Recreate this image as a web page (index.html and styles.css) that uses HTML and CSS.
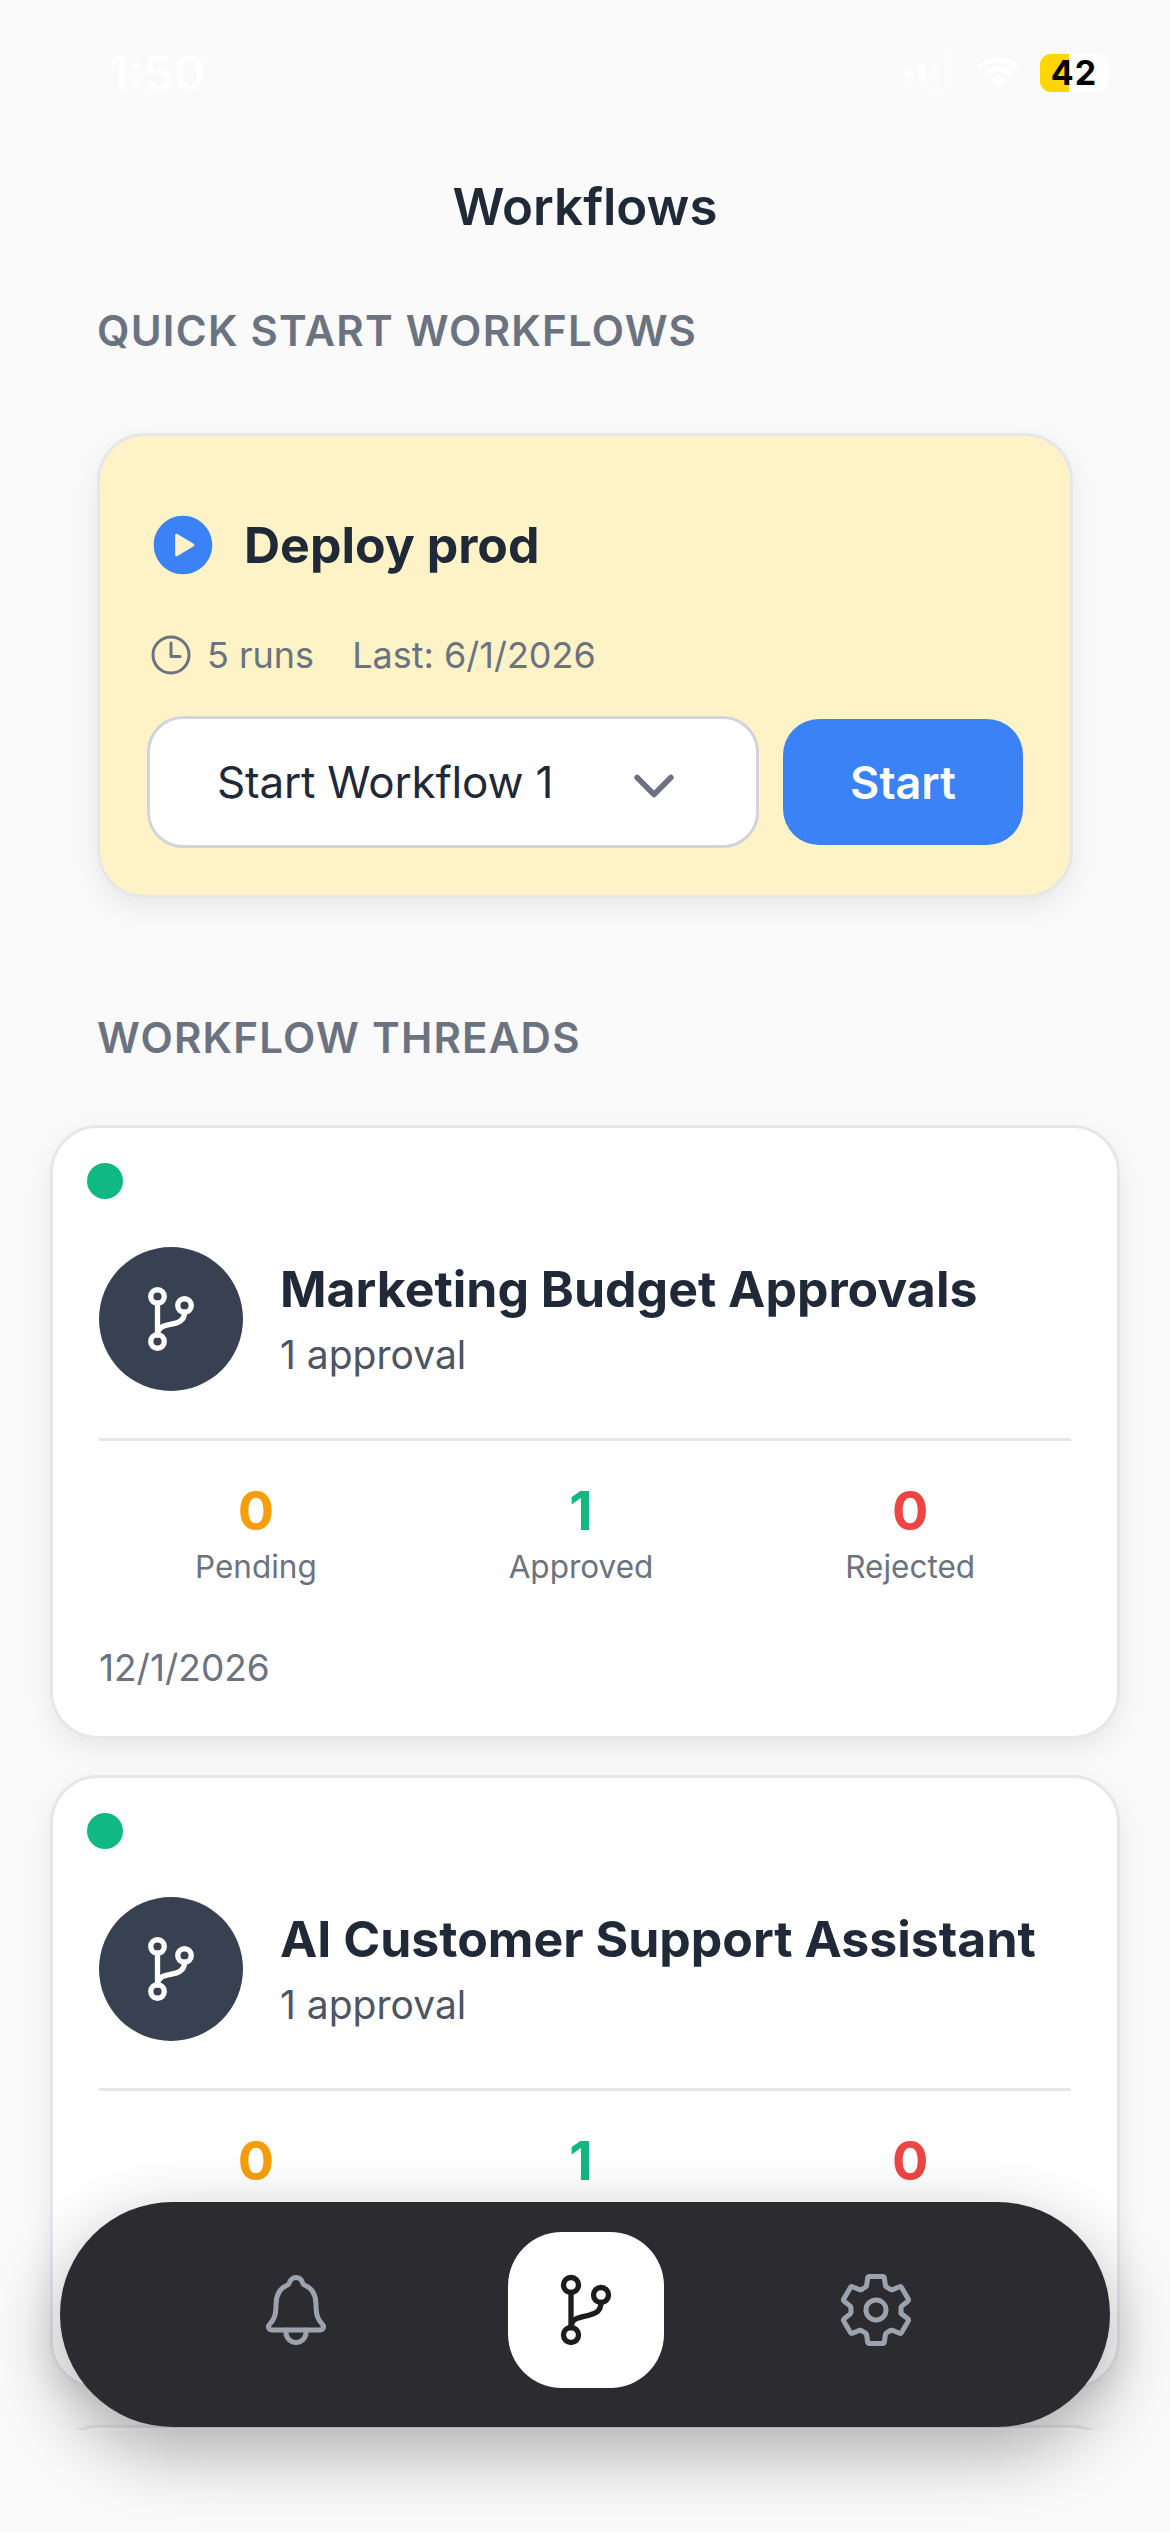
FILE: index.html
```html
<!DOCTYPE html>
<html lang="en">
<head>
    <meta charset="UTF-8">
    <meta name="viewport" content="width=device-width, initial-scale=1.0">
    <title>Workflows</title>
    <link rel="stylesheet" href="styles.css">
</head>
<body>
    <svg class="sprites" aria-hidden="true">
        <symbol id="i-branch" viewBox="0 0 512 512">
            <circle cx="160" cy="96" r="48"/>
            <circle cx="160" cy="416" r="48"/>
            <path d="M160 368V144"/>
            <circle cx="352" cy="160" r="48"/>
            <path d="M352 208c0 128-192 48-192 160"/>
        </symbol>
    </svg>

    <div class="status-bar">
        <span class="time">1:50</span>
        <div class="status-icons">
            <svg class="signal" viewBox="0 0 52 36">
                <rect x="1" y="13" width="8" height="11" rx="3"/>
                <rect x="14" y="8" width="8" height="16" rx="3"/>
                <rect class="signal-off" x="27" y="4" width="8" height="20" rx="3"/>
                <rect class="signal-off" x="40" y="0" width="8" height="24" rx="3"/>
                <circle class="signal-off" cx="5" cy="31" r="4"/>
                <circle class="signal-off" cx="18" cy="31" r="4"/>
                <circle class="signal-off" cx="31" cy="31" r="4"/>
                <circle class="signal-off" cx="44" cy="31" r="4"/>
            </svg>
            <svg class="wifi" viewBox="0 0 48 36">
                <path d="M24 8c7 0 13 2.600 18 7l3.500-4C39.800 5.500 32.300 2 24 2S8.200 5.500 2.500 11L6 15c5-4.400 11-7 18-7z"/>
                <path d="M24 17c4.500 0 8.300 1.500 11.500 4.300l3.500-4C34.900 13.500 29.800 11 24 11s-10.900 2.500-15 6.300l3.500 4C15.700 18.500 19.500 17 24 17z"/>
                <path d="M24 21c-3 0-5.500 1-7.700 3L24 34l7.700-10c-2.200-2-4.700-3-7.700-3z"/>
            </svg>
            <div class="battery">
                <div class="battery-fill"></div>
                <span class="battery-level">42</span>
            </div>
        </div>
    </div>

    <h1 class="page-title">Workflows</h1>

    <div class="content">
        <h2 class="section-label">Quick Start Workflows</h2>

        <div class="quick-card">
            <div class="quick-head">
                <svg class="play-icon" viewBox="0 0 512 512">
                    <path d="M256 48C141.310 48 48 141.310 48 256s93.310 208 208 208 208-93.310 208-208S370.690 48 256 48zm74.770 217.300l-114.450 69.140a10.780 10.780 0 01-16.320-9.310V186.870a10.780 10.780 0 0116.320-9.310l114.450 69.140a10.890 10.890 0 010 18.600z"/>
                </svg>
                <span class="quick-title">Deploy prod</span>
            </div>
            <div class="quick-meta">
                <svg class="clock-icon" viewBox="0 0 512 512">
                    <path d="M256 64C150 64 64 150 64 256s86 192 192 192 192-86 192-192S362 64 256 64z"/>
                    <path d="M256 128v144h96"/>
                </svg>
                <span class="runs">5 runs</span>
                <span>Last: 6/1/2026</span>
            </div>
            <div class="quick-actions">
                <div class="select-box">
                    <span>Start Workflow 1</span>
                    <svg class="chevron" viewBox="0 0 512 512"><path d="M112 184l144 144 144-144"/></svg>
                </div>
                <button class="start-btn" type="button">Start</button>
            </div>
        </div>

        <h2 class="section-label threads-label">Workflow Threads</h2>

        <div class="thread-card">
            <span class="live-dot"></span>
            <div class="thread-head">
                <div class="avatar"><svg class="branch"><use href="#i-branch"/></svg></div>
                <div>
                    <div class="thread-title">Marketing Budget Approvals</div>
                    <div class="thread-sub">1 approval</div>
                </div>
            </div>
            <div class="stats">
                <div class="stat"><div class="stat-num pending">0</div><div class="stat-label">Pending</div></div>
                <div class="stat"><div class="stat-num approved">1</div><div class="stat-label">Approved</div></div>
                <div class="stat"><div class="stat-num rejected">0</div><div class="stat-label">Rejected</div></div>
            </div>
            <div class="thread-date">12/1/2026</div>
        </div>

        <div class="thread-card">
            <span class="live-dot"></span>
            <div class="thread-head">
                <div class="avatar"><svg class="branch"><use href="#i-branch"/></svg></div>
                <div>
                    <div class="thread-title">AI Customer Support Assistant</div>
                    <div class="thread-sub">1 approval</div>
                </div>
            </div>
            <div class="stats">
                <div class="stat"><div class="stat-num pending">0</div><div class="stat-label">Pending</div></div>
                <div class="stat"><div class="stat-num approved">1</div><div class="stat-label">Approved</div></div>
                <div class="stat"><div class="stat-num rejected">0</div><div class="stat-label">Rejected</div></div>
            </div>
            <div class="thread-date">12/1/2026</div>
        </div>

        <div class="thread-card thread-next"></div>
    </div>

    <nav class="tab-bar">
        <svg class="tab-icon" viewBox="0 0 512 512">
            <path d="M427.680 351.430C402 320 383.870 304 383.870 217.350 383.870 138 343.350 109.730 310 96c-4.430-1.820-8.600-6-9.950-10.550C294.200 65.540 277.800 48 256 48s-38.210 17.550-44 37.470c-1.350 4.600-5.520 8.710-9.950 10.530-33.390 13.750-73.870 41.920-73.870 121.350C128.130 304 110 320 84.320 351.430 73.680 364.450 83 384 101.610 384h308.880c18.510 0 27.770-19.610 17.190-32.570z"/>
            <path d="M320 384v16a64 64 0 01-128 0v-16"/>
        </svg>
        <div class="tab-active"><svg class="branch"><use href="#i-branch"/></svg></div>
        <svg class="tab-icon" viewBox="0 0 512 512">
            <path d="M262.290 192.310a64 64 0 1057.400 57.400 64.130 64.130 0 00-57.400-57.400zM416.390 256a154.340 154.340 0 01-1.530 20.790l45.210 35.460a10.810 10.810 0 012.450 13.750l-42.770 74a10.810 10.810 0 01-13.140 4.590l-44.900-18.080a16.110 16.110 0 00-15.170 1.750A164.480 164.480 0 01325 400.800a15.940 15.940 0 00-8.820 12.140l-6.730 47.890a11.080 11.080 0 01-10.680 9.170h-85.540a11.110 11.110 0 01-10.690-8.870l-6.720-47.820a16.070 16.070 0 00-9-12.220 155.300 155.300 0 01-21.460-12.570 16 16 0 00-15.110-1.710l-44.890 18.070a10.810 10.810 0 01-13.140-4.580l-42.770-74a10.800 10.800 0 012.450-13.750l38.210-30a16.050 16.050 0 006-14.080c-.36-4.170-.58-8.330-.58-12.500s.21-8.270.58-12.350a16 16 0 00-6.070-13.940l-38.190-30A10.810 10.810 0 0149.480 186l42.770-74a10.810 10.810 0 0113.140-4.590l44.900 18.080a16.110 16.110 0 0015.170-1.750A164.480 164.480 0 01187 111.200a15.940 15.940 0 008.820-12.140l6.730-47.890A11.080 11.080 0 01213.230 42h85.540a11.110 11.110 0 0110.690 8.870l6.720 47.820a16.070 16.070 0 009 12.220 155.300 155.300 0 0121.460 12.570 16 16 0 0015.110 1.710l44.890-18.070a10.810 10.810 0 0113.140 4.580l42.770 74a10.800 10.800 0 01-2.450 13.750l-38.210 30a16.050 16.050 0 00-6.050 14.080c.33 4.140.55 8.300.55 12.470z"/>
        </svg>
    </nav>
</body>
</html>
```

FILE: styles.css
```css
:root {
    --background-color: #fafafa;
    --text-color: #1f2937;
    --muted-color: #6b7280;
    --border-color: #e5e7eb;
    --blue: #3b82f6;
    --green: #10b981;
    --nav-color: #2c2c30;
}
* {
    box-sizing: border-box;
}
html, body {
    margin: 0;
    padding: 0;
}
body {
    position: relative;
    width: 1170px;
    height: 2532px;
    overflow: hidden;
    font-family: 'Inter', 'Liberation Sans', sans-serif;
    color: var(--text-color);
    background-color: var(--background-color);
}
.sprites {
    display: none;
}
.status-bar {
    display: flex;
    justify-content: space-between;
    align-items: center;
    height: 174px;
    padding: 0 62px 28px 108px;
    color: #fff;
}
.time {
    font-size: 48px;
    font-weight: 600;
}
.status-icons {
    display: flex;
    align-items: center;
}
.signal {
    width: 52px;
    height: 36px;
    fill: #fff;
}
.signal-off {
    opacity: 0.4;
}
.wifi {
    width: 48px;
    height: 36px;
    margin-left: 18px;
    fill: #fff;
}
.battery {
    position: relative;
    width: 68px;
    height: 38px;
    margin-left: 18px;
    border-radius: 11px;
    background-color: #fff;
}
.battery-fill {
    width: 42%;
    height: 100%;
    border-radius: 11px 0 0 11px;
    background-color: #ffd600;
}
.battery-level {
    position: absolute;
    top: 0;
    left: 0;
    width: 100%;
    font-size: 34px;
    font-weight: 700;
    line-height: 38px;
    letter-spacing: 1px;
    text-align: center;
    color: #000;
}
.page-title {
    margin: 0;
    font-size: 51px;
    font-weight: 600;
    line-height: 66px;
    text-align: center;
}
.content {
    height: 2190px;
    padding: 65px 50px 0;
    overflow: hidden;
}
.section-label {
    margin: 0 0 77px 47px;
    font-size: 42px;
    font-weight: 600;
    line-height: 51px;
    letter-spacing: 1.25px;
    text-transform: uppercase;
    color: var(--muted-color);
}
.threads-label {
    margin-top: 114px;
    margin-bottom: 62px;
}
.quick-card {
    width: 976px;
    margin-left: 47px;
    padding: 73px 47px 47px;
    background-color: #fef3c7;
    border: 3px solid var(--border-color);
    border-radius: 48px;
    box-shadow: 0 10px 30px rgba(0, 0, 0, 0.08);
}
.quick-head {
    display: flex;
    align-items: center;
    gap: 25px;
}
.play-icon {
    width: 72px;
    height: 72px;
    fill: var(--blue);
}
.quick-title {
    font-size: 50px;
    font-weight: 700;
}
.quick-meta {
    display: flex;
    align-items: center;
    margin-top: 50px;
    font-size: 36px;
    color: var(--muted-color);
}
.clock-icon {
    width: 48px;
    height: 48px;
    margin-right: 12px;
    fill: none;
    stroke: var(--muted-color);
    stroke-width: 32;
    stroke-linecap: round;
    stroke-linejoin: round;
}
.runs {
    margin-right: 38px;
}
.quick-actions {
    display: flex;
    align-items: center;
    gap: 24px;
    margin-top: 37px;
}
.select-box {
    display: flex;
    justify-content: space-between;
    align-items: center;
    width: 612px;
    height: 132px;
    padding: 0 72px 0 67px;
    font-size: 44px;
    letter-spacing: -0.2px;
    background-color: #fff;
    border: 3px solid #d1d5db;
    border-radius: 36px;
}
.chevron {
    width: 60px;
    height: 60px;
    margin-top: 8px;
    fill: none;
    stroke: var(--muted-color);
    stroke-width: 48;
    stroke-linecap: round;
    stroke-linejoin: round;
}
.start-btn {
    width: 240px;
    height: 126px;
    padding: 0;
    font-family: inherit;
    font-size: 45px;
    font-weight: 600;
    color: #fff;
    background-color: var(--blue);
    border: none;
    border-radius: 36px;
}
.thread-card {
    position: relative;
    width: 1070px;
    height: 614px;
    margin-bottom: 36px;
    padding: 119px 46px 0;
    background-color: #fff;
    border: 3px solid var(--border-color);
    border-radius: 48px;
    box-shadow: 0 10px 30px rgba(0, 0, 0, 0.08);
}
.live-dot {
    position: absolute;
    top: 35px;
    left: 34px;
    width: 36px;
    height: 36px;
    border-radius: 50%;
    background-color: var(--green);
}
.thread-head {
    display: flex;
    align-items: center;
    gap: 37px;
    padding-bottom: 47px;
    border-bottom: 3px solid var(--border-color);
}
.avatar {
    display: flex;
    justify-content: center;
    align-items: center;
    width: 144px;
    height: 144px;
    flex-shrink: 0;
    border-radius: 50%;
    background-color: #374151;
}
.branch {
    fill: none;
    stroke-linecap: round;
    stroke-linejoin: round;
}
.avatar .branch {
    width: 72px;
    height: 72px;
    stroke: #fff;
    stroke-width: 38;
}
.thread-title {
    font-size: 50px;
    font-weight: 700;
    line-height: 60px;
}
.thread-sub {
    margin-top: 11px;
    font-size: 39px;
    line-height: 50px;
    color: #4b5563;
}
.stats {
    display: flex;
    justify-content: space-around;
    padding-top: 37px;
}
.stat {
    text-align: center;
}
.stat-num {
    font-size: 54px;
    font-weight: 700;
    line-height: 66px;
}
.pending {
    color: #f59e0b;
}
.approved {
    color: var(--green);
}
.rejected {
    color: #ef4444;
}
.stat-label {
    font-size: 31.5px;
    line-height: 46px;
    color: var(--muted-color);
}
.thread-date {
    margin-top: 54px;
    font-size: 37px;
    line-height: 48px;
    color: var(--muted-color);
}
.tab-bar {
    position: absolute;
    top: 2202px;
    left: 60px;
    display: flex;
    justify-content: space-between;
    align-items: center;
    width: 1050px;
    height: 225px;
    padding: 0 194px 9px 196px;
    border-radius: 113px;
    background-color: var(--nav-color);
    box-shadow: 0 24px 72px rgba(0, 0, 0, 0.32);
}
.tab-icon {
    width: 80px;
    height: 80px;
    fill: none;
    stroke: #9ca3af;
    stroke-width: 32;
    stroke-linecap: round;
    stroke-linejoin: round;
}
.tab-active {
    display: flex;
    justify-content: center;
    align-items: center;
    width: 156px;
    height: 156px;
    border-radius: 54px;
    background-color: #fff;
}
.tab-active .branch {
    width: 80px;
    height: 80px;
    stroke: #1c1c1e;
    stroke-width: 34;
}
```
